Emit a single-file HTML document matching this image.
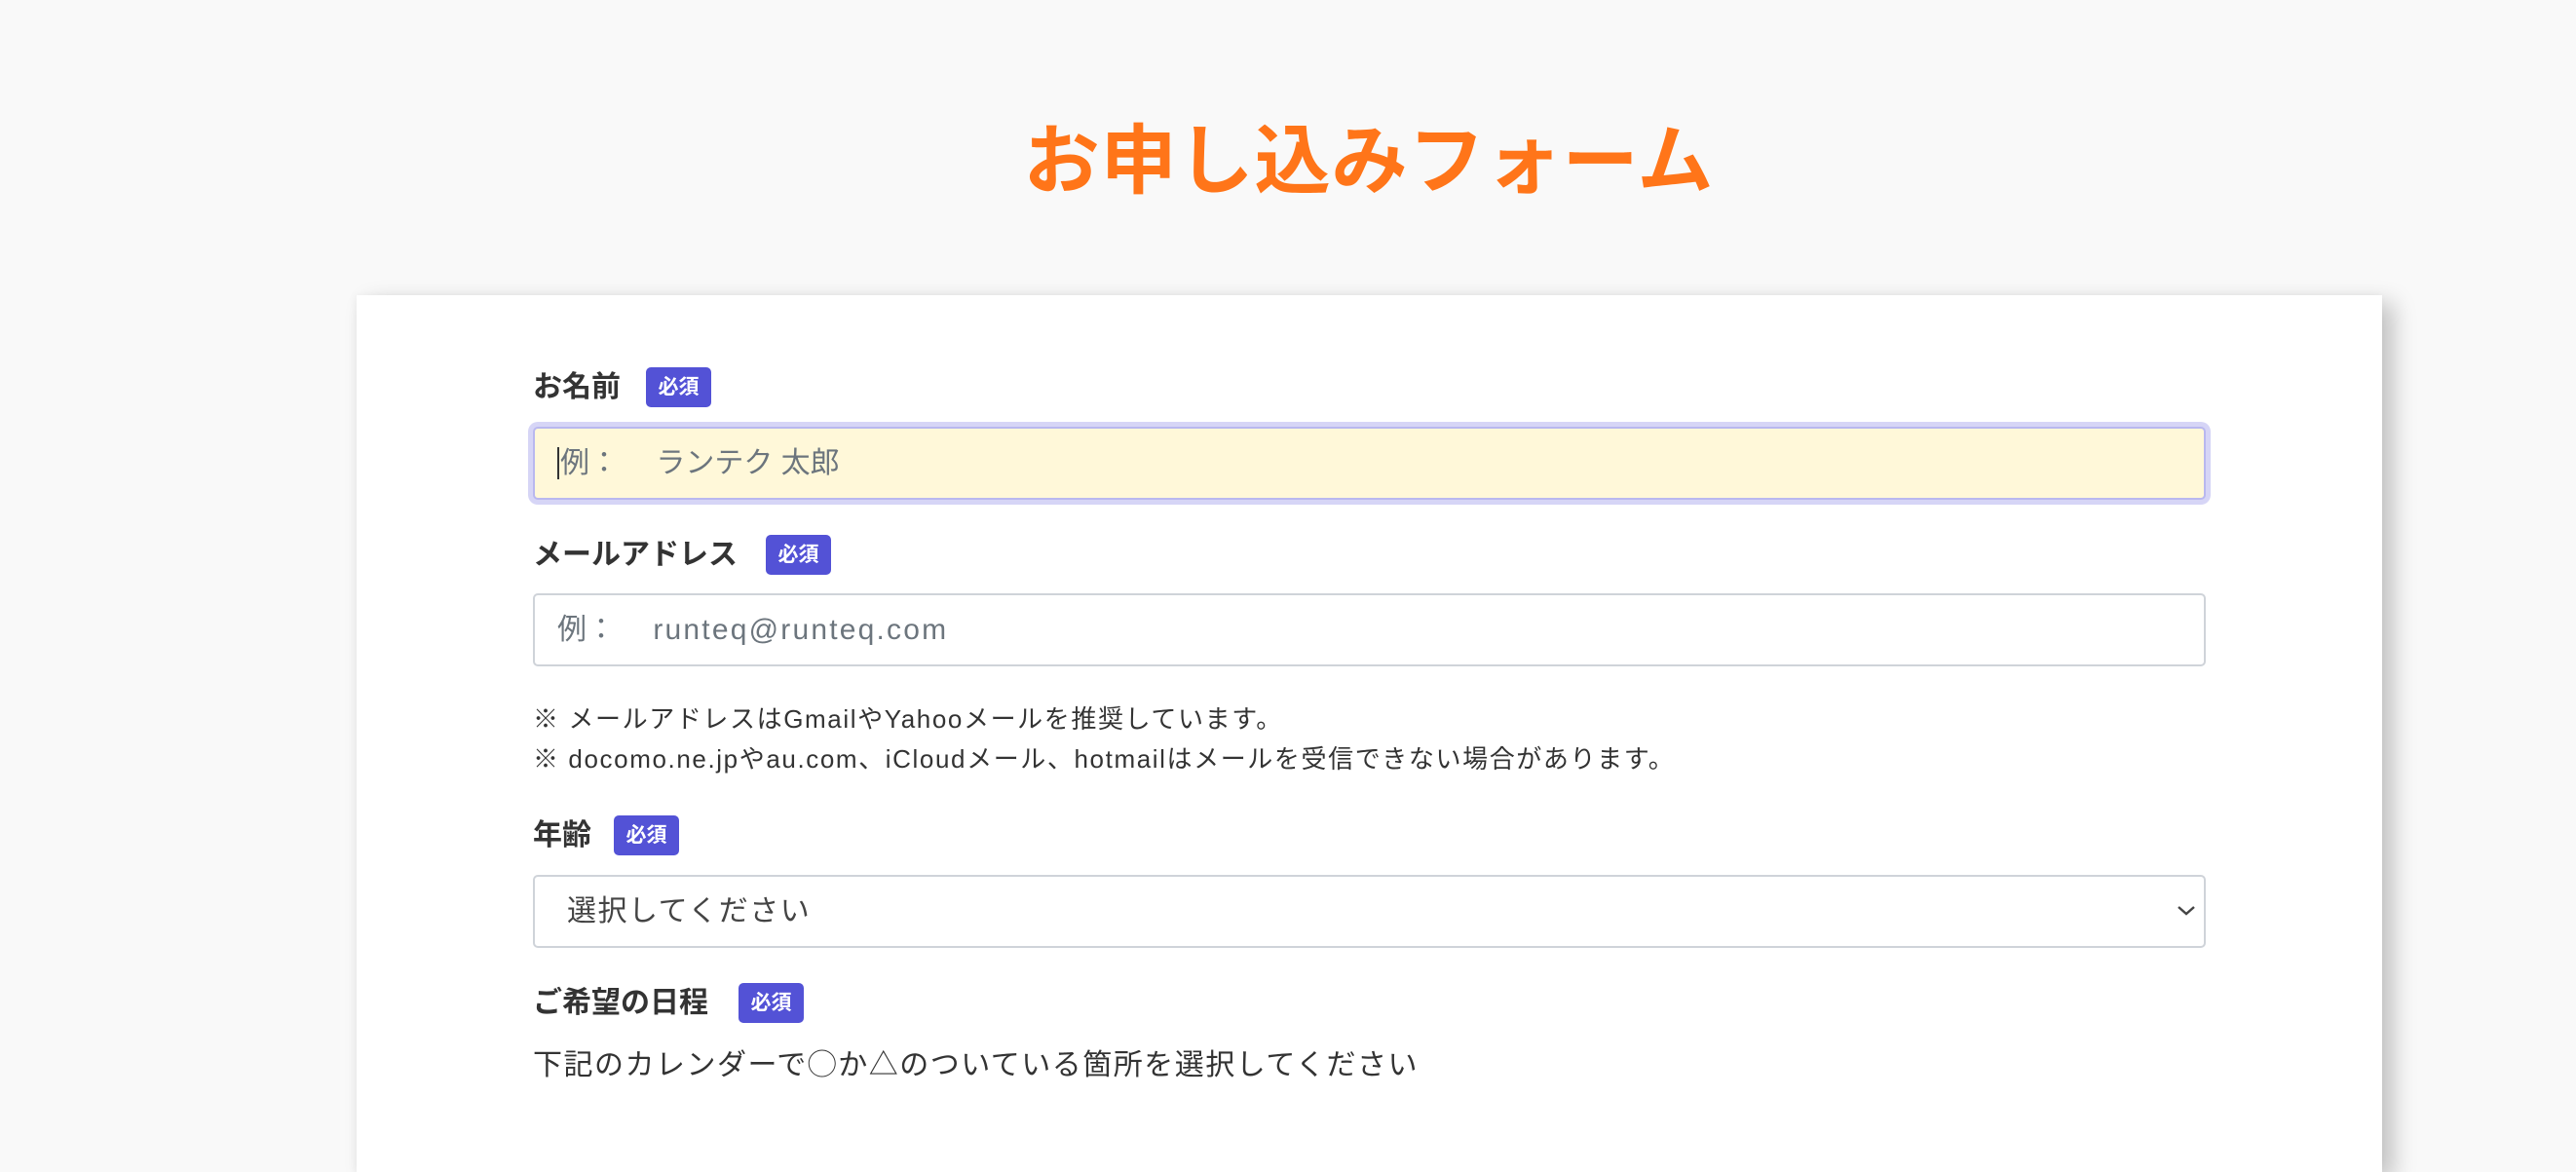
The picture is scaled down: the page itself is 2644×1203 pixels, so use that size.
<!DOCTYPE html>
<html lang="ja"><head><meta charset="utf-8">
<style>
*{box-sizing:border-box;margin:0;padding:0}
html,body{width:2644px;height:1136px;overflow:hidden;background:#f9f9f9;font-family:"Liberation Sans","Noto Sans CJK JP",sans-serif;color:#333}
.title{position:absolute;left:1040px;top:103px;width:730px;text-align:center;font-size:78px;font-weight:700;color:#ff7519;line-height:124px;letter-spacing:1px;white-space:nowrap}
.card{position:absolute;left:366px;top:303px;width:2079px;height:900px;background:#fff;box-shadow:12px 8px 22px rgba(0,0,0,.22),-2px 0 8px rgba(0,0,0,.04)}
.lbl{position:absolute;left:547px;font-size:30px;font-weight:700;color:#333;line-height:41px;white-space:nowrap}
.badge{position:absolute;height:41px;width:67px;background:#5352d6;border-radius:5px;color:#fff;font-size:21px;font-weight:700;text-align:center;line-height:41px}
.inp{position:absolute;left:547px;width:1717px;height:75px;border:2px solid #cfd3d9;border-radius:5px;background:#fff;font-size:30px;color:#6c757d;line-height:71px;padding-left:23px;white-space:nowrap}
.focus{background:#fff8d9;border-color:#b9b8ef;box-shadow:0 0 0 5px #d6d5f6}
.note{position:absolute;left:547px;font-size:26px;letter-spacing:1.6px;color:#333;line-height:41px;white-space:nowrap}
.txt{position:absolute;left:547px;font-size:30px;letter-spacing:1.5px;color:#333;line-height:40px;white-space:nowrap}
</style></head><body>
<div class="title">お申し込みフォーム</div>
<div class="card"></div>

<div class="lbl" style="top:377px">お名前</div>
<div class="badge" style="left:663px;top:377px">必須</div>
<div class="inp focus" style="top:438px"><span style="border-left:2px solid #333;padding-left:1px">例</span>：　 ランテク 太郎</div>

<div class="lbl" style="top:549px">メールアドレス</div>
<div class="badge" style="left:786px;top:549px">必須</div>
<div class="inp" style="top:609px">例：　 <span style="letter-spacing:2.2px">runteq@runteq.com</span></div>

<div class="note" style="top:718px">※ メールアドレスはGmailやYahooメールを推奨しています。</div>
<div class="note" style="top:759px">※ docomo.ne.jpやau.com、iCloudメール、hotmailはメールを受信できない場合があります。</div>

<div class="lbl" style="top:837px">年齢</div>
<div class="badge" style="left:630px;top:837px">必須</div>
<div class="inp" style="top:898px;color:#444;padding-left:33px;letter-spacing:1.5px">選択してください
<svg style="position:absolute;right:8px;top:28px" width="20" height="14" viewBox="0 0 20 14"><path d="M2 3 L10 10 L18 3" fill="none" stroke="#444" stroke-width="2.4"/></svg></div>

<div class="lbl" style="top:1009px">ご希望の日程</div>
<div class="badge" style="left:758px;top:1009px">必須</div>
<div class="txt" style="top:1074px">下記のカレンダーで◯か△のついている箇所を選択してください</div>
</body></html>
